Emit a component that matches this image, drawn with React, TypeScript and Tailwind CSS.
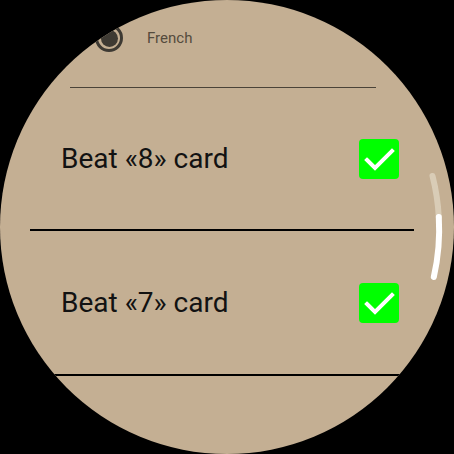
import React from 'react'

function CheckBox() {
  return (
    <div className="w-[40px] h-[40px] rounded-[4px] bg-[#00ff00] flex items-center justify-center">
      <svg width="40" height="40" viewBox="0 0 40 40">
        <polyline
          points="8,21 16,29 33,12"
          fill="none"
          stroke="#ffffff"
          strokeWidth="4"
          strokeLinecap="square"
        />
      </svg>
    </div>
  )
}

function Row({ label, h }: { label: string; h: string }) {
  return (
    <div className={`${h} flex items-center justify-between pl-[61px] pr-[55px]`}>
      <span className="text-[28px] text-[#121212]">{label}</span>
      <CheckBox />
    </div>
  )
}

export default function App() {
  return (
    <div className="w-[454px] h-[454px] bg-black" style={{ fontFamily: 'Roboto, "Liberation Sans", sans-serif' }}>
      <div className="relative w-[454px] h-[454px] rounded-full bg-[#c4af93] overflow-hidden">
        <div className="flex flex-col">
          <div className="pt-[24px] h-[52px] flex items-center pl-[95px] gap-[24px]">
            <div className="w-[28px] h-[28px] rounded-full border-[3px] border-[#3e3a33] flex items-center justify-center">
              <div className="w-[17px] h-[17px] rounded-full bg-[#3e3a33]" />
            </div>
            <span className="text-[15px] text-[#544b3d]">French</span>
          </div>
          <div className="mt-[35px] ml-[70px] w-[306px] h-px bg-[#4a4338]" />
          <Row label="Beat «8» card" h="h-[141px]" />
          <div className="ml-[30px] mr-[40px] h-[2px] bg-black" />
          <Row label="Beat «7» card" h="h-[143px]" />
          <div className="ml-[30px] mr-[40px] h-[2px] bg-black" />
        </div>
        <svg className="absolute left-0 top-0" width="454" height="454" viewBox="0 0 454 454">
          <path
            d="M 432.5 176 A 212 212 0 0 1 438.8 217"
            fill="none"
            stroke="#d9ccb6"
            strokeWidth="6"
            strokeLinecap="round"
          />
          <path
            d="M 438.8 217 A 212 212 0 0 1 433.8 277"
            fill="none"
            stroke="#ffffff"
            strokeWidth="6"
            strokeLinecap="round"
          />
        </svg>
      </div>
    </div>
  )
}
